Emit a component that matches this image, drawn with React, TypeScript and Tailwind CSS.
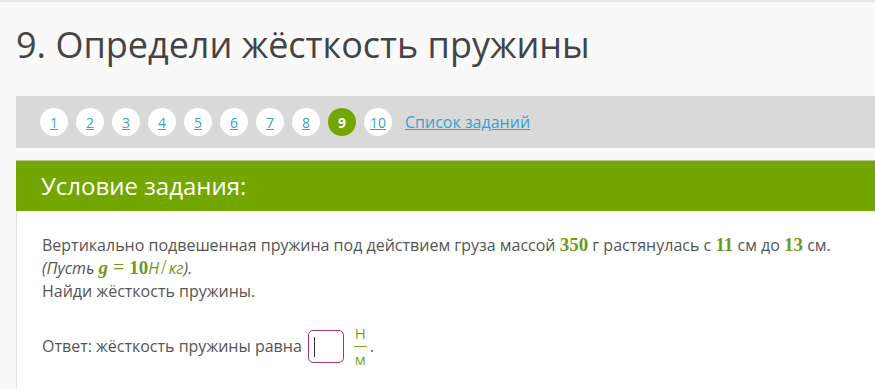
export default function App() {
  const pages = ['1', '2', '3', '4', '5', '6', '7', '8', '9', '10']
  const num = 'font-["Liberation_Serif",serif] font-bold text-[19px] leading-none text-[#6d9a1e] not-italic'

  return (
    <div className="min-h-screen bg-[#f9f9f9] border-t-2 border-[#e4e7eb] pl-4 font-['Open_Sans',sans-serif]">
      {/* заголовок */}
      <h1 className="pt-[21px] text-[36px] leading-[43px] text-[#444]">9. Определи жёсткость пружины</h1>

      {/* навигация по заданиям */}
      <div className="mt-[30px] h-[52px] bg-[#d9d9d9] flex items-center pl-6 gap-2">
        {pages.map((p) =>
          p === '9' ? (
            <span key={p} className="w-7 h-7 rounded-full bg-[#74a600] text-white text-[14px] font-bold flex items-center justify-center">
              {p}
            </span>
          ) : (
            <a key={p} href="#" className="w-7 h-7 rounded-full bg-white text-[#3a9fcf] text-[14px] underline flex items-center justify-center">
              {p}
            </a>
          )
        )}
        <a href="#" className="ml-[5px] text-[16px] text-[#3a9fcf] underline">Список заданий</a>
      </div>

      {/* условие */}
      <div className="mt-3 border-t border-[#b9c98f]">
        <div className="h-[50px] bg-[#74a600] flex items-center pl-[25px] text-white text-[24px]">Условие задания:</div>
        <div className="bg-white border-l border-[#e2e2e2] pl-[25px] pt-[23px] pb-10 text-[16px] leading-[23px] text-[#555]">
          <p>
            Вертикально подвешенная пружина под действием груза массой <span className={num}>350</span> г растянулась с{' '}
            <span className={num}>11</span> см до <span className={num}>13</span> см.
          </p>
          <p className="italic">
            (Пусть <span className={`${num} !italic`}>g</span>
            <span className="font-['Liberation_Serif',serif] text-[20px] leading-none text-[#6d9a1e] not-italic mx-[5px]">=</span>
            <span className={num}>10</span><span className="text-[#6d9a1e]">Н</span>
            <span className="font-['Liberation_Serif',serif] text-[20px] leading-none text-[#6d9a1e] not-italic mx-[2px]">/</span>
            <span className="text-[#6d9a1e]">кг</span>).
          </p>
          <p>Найди жёсткость пружины.</p>

          <div className="mt-[22px] flex items-center">
            <span>Ответ: жёсткость пружины равна</span>
            <div className="ml-[6px] w-9 h-[33px] border border-[#b0306e] rounded-[5px] bg-white flex items-center pl-[5px]">
              <span className="w-px h-5 bg-[#333]" />
            </div>
            <div className="ml-[10px] flex flex-col items-center text-[#7aa32a] text-[15px] leading-[17px]">
              <span>Н</span>
              <span className="w-[13px] h-px bg-[#7aa32a] my-[4px]" />
              <span>м</span>
            </div>
            <span className="ml-[3px]">.</span>
          </div>
        </div>
      </div>
    </div>
  )
}
